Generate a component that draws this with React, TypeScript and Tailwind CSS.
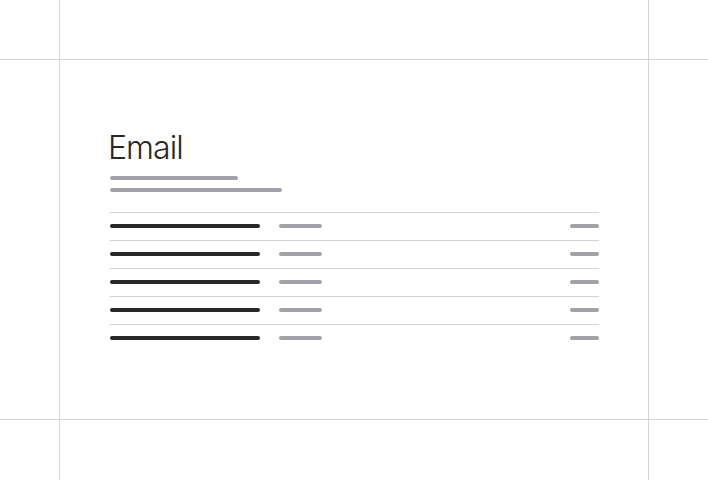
import React from 'react';

const rows = [0, 1, 2, 3, 4];

const App: React.FC = () => {
  return (
    <div
      className="grid h-[480px] w-[708px] grid-cols-[59px_588px_59px] grid-rows-[59px_359px_60px] gap-px bg-[#d4d4d4]"
      style={{ fontFamily: 'Inter, "Noto Sans", sans-serif' }}
    >
      <div className="bg-white" />
      <div className="bg-white" />
      <div className="bg-white" />
      <div className="bg-white" />

      {/* Card */}
      <div className="flex flex-col bg-white pl-[50px] pr-[49px] pt-[72px]">
        <h1 className="-ml-[2px] text-[32px] font-light leading-[32px] tracking-[-0.03em] text-[#27272a]">Email</h1>
        <div className="mt-[12px] h-[4px] w-[128px] rounded-full bg-[#a1a1aa]" />
        <div className="mt-[8px] h-[4px] w-[172px] rounded-full bg-[#a1a1aa]" />

        <div className="mt-[20px] flex flex-col">
          {rows.map((r) => (
            <div key={r} className="flex h-[28px] items-center border-t border-[#d4d4d4] pb-px">
              <div className="h-[4px] w-[150px] rounded-full bg-[#27272a]" />
              <div className="ml-[19px] h-[4px] w-[43px] rounded-full bg-[#a1a1aa]" />
              <div className="ml-auto h-[4px] w-[29px] rounded-full bg-[#a1a1aa]" />
            </div>
          ))}
        </div>
      </div>

      <div className="bg-white" />
      <div className="bg-white" />
      <div className="bg-white" />
      <div className="bg-white" />
    </div>
  );
};

export default App;
